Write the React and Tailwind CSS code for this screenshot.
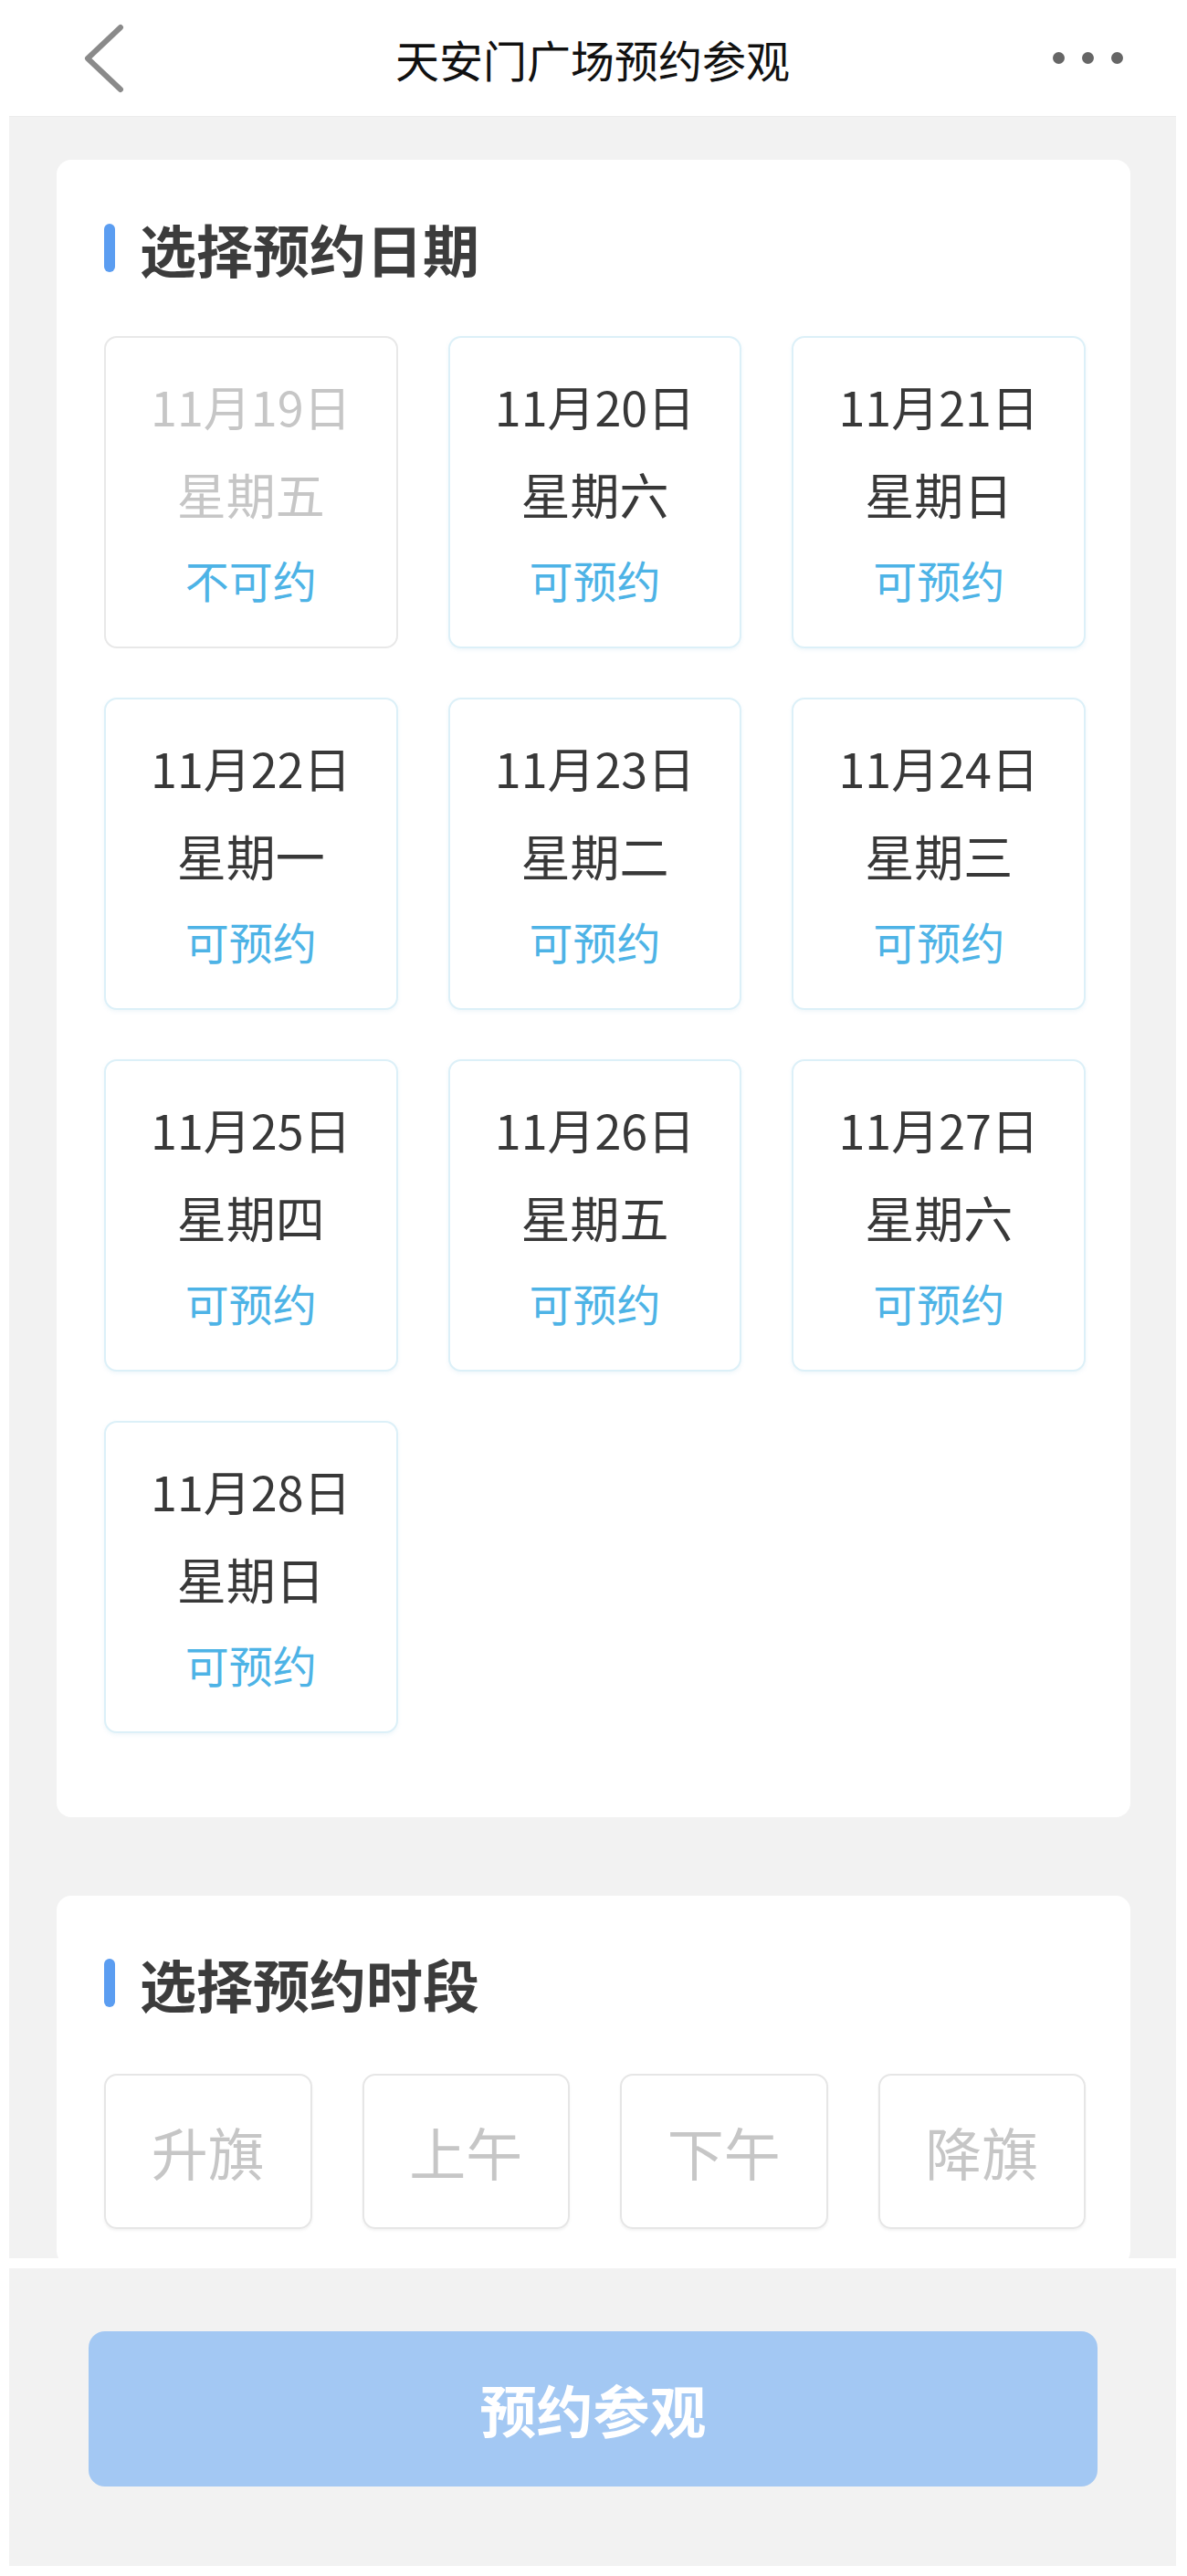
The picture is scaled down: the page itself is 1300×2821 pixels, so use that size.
import { useState } from "react";

const dates = [
    { date: "11月19日", week: "星期五", ok: false },
    { date: "11月20日", week: "星期六", ok: true },
    { date: "11月21日", week: "星期日", ok: true },
    { date: "11月22日", week: "星期一", ok: true },
    { date: "11月23日", week: "星期二", ok: true },
    { date: "11月24日", week: "星期三", ok: true },
    { date: "11月25日", week: "星期四", ok: true },
    { date: "11月26日", week: "星期五", ok: true },
    { date: "11月27日", week: "星期六", ok: true },
    { date: "11月28日", week: "星期日", ok: true },
];

const slots = ["升旗", "上午", "下午", "降旗"];

function SectionTitle({ children }) {
    return (
        <div className="flex h-[53px] items-center">
            <div className="h-[53px] w-[12px] rounded-full bg-[#5b9df1]" />
            <div className="ml-[27px] text-[62px] font-bold leading-none text-[#3c3c3c]">{children}</div>
        </div>
    );
}

export default function App() {
    const [picked, setPicked] = useState(null);

    return (
        <div className="min-h-[2821px] bg-white pb-[11px] pl-[10px] pr-[12px] font-['Noto_Sans_CJK_SC','Noto_Sans',sans-serif]">
            <header className="grid h-[128px] grid-cols-[1fr_auto_1fr] items-center border-b border-[#ececec] bg-white">
                <div className="pl-[80px]">
                    <svg width="48" height="76" viewBox="0 0 48 76" fill="none">
                        <polyline
                            points="42,4 6,38 42,72"
                            stroke="#8a8a8a"
                            strokeWidth="6"
                            strokeLinecap="round"
                            strokeLinejoin="round"
                        />
                    </svg>
                </div>
                <div className="text-[48px] leading-none text-[#111]">天安门广场预约参观</div>
                <div className="flex justify-end gap-[19px] pr-[58px]">
                    <span className="h-[13px] w-[13px] rounded-full bg-[#666]" />
                    <span className="h-[13px] w-[13px] rounded-full bg-[#666]" />
                    <span className="h-[13px] w-[13px] rounded-full bg-[#666]" />
                </div>
            </header>

            <main className="h-[2345px] overflow-hidden bg-[#f2f2f2] pl-[52px] pr-[50px] pt-[47px]">
                <section className="rounded-[16px] bg-white pb-[92px] pl-[52px] pr-[49px] pt-[70px]">
                    <SectionTitle>选择预约日期</SectionTitle>
                    <div className="mt-[70px] grid grid-cols-3 gap-x-[55px] gap-y-[54px]">
                        {dates.map((d, i) => (
                            <button
                                key={d.date}
                                type="button"
                                onClick={() => d.ok && setPicked(i)}
                                className={
                                    "flex h-[342px] flex-col items-center rounded-[14px] border-2 bg-white pt-[27px] " +
                                    (d.ok
                                        ? picked === i
                                            ? "border-[#5b9df1]"
                                            : "border-[#dcf0f8] shadow-[0_2px_4px_rgba(120,180,210,0.12)]"
                                        : "border-[#e8e8e8]")
                                }
                            >
                                <div
                                    className={
                                        "flex h-[96px] items-center text-[52px] " +
                                        (d.ok ? "text-[#383838]" : "text-[#c6c6c6]")
                                    }
                                >
                                    {d.date}
                                </div>
                                <div
                                    className={
                                        "flex h-[94px] items-center text-[54px] " +
                                        (d.ok ? "text-[#383838]" : "text-[#c6c6c6]")
                                    }
                                >
                                    {d.week}
                                </div>
                                <div className="flex h-[94px] items-center text-[48px] text-[#4db3e6]">
                                    {d.ok ? "可预约" : "不可约"}
                                </div>
                            </button>
                        ))}
                    </div>
                </section>

                <section className="mt-[86px] rounded-[16px] bg-white pb-[40px] pl-[52px] pr-[49px] pt-[69px]">
                    <SectionTitle>选择预约时段</SectionTitle>
                    <div className="mt-[73px] grid grid-cols-4 gap-x-[55px]">
                        {slots.map((s) => (
                            <div
                                key={s}
                                className="flex h-[170px] items-center justify-center rounded-[14px] border-2 border-[#e6e6e6] text-[62px] text-[#c6c6c6] shadow-[0_2px_3px_rgba(0,0,0,0.05)]"
                            >
                                {s}
                            </div>
                        ))}
                    </div>
                </section>
            </main>

            <div className="h-[11px] bg-white" />

            <footer className="h-[326px] bg-[#f2f2f2] pl-[87px] pr-[86px] pt-[69px]">
                <button
                    type="button"
                    className="flex h-[170px] w-full items-center justify-center rounded-[18px] bg-[#a3c8f3] text-[62px] font-bold text-white"
                >
                    预约参观
                </button>
            </footer>
        </div>
    );
}
